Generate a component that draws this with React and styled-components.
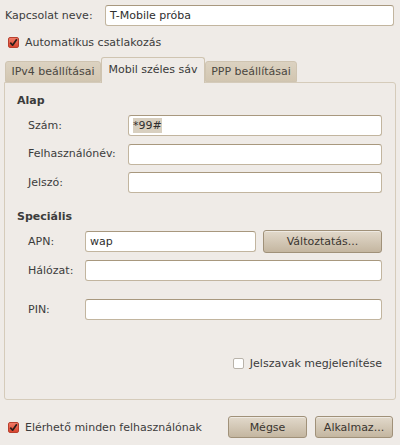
import React from "react";
import styled, { createGlobalStyle } from "styled-components";

const Global = createGlobalStyle`
  html, body { margin: 0; padding: 0; background: #efebe7; }
  body { width: 400px; height: 445px; overflow: hidden; font-family: "DejaVu Sans", sans-serif; font-size: 11px; color: #3c3c3c; }
  * { box-sizing: border-box; }
`;

const Root = styled.div`
  width: 400px;
  height: 445px;
  padding: 5px 7px 0 4px;
  display: flex;
  flex-direction: column;
`;

const NameRow = styled.div`
  display: flex;
  align-items: center;
  height: 21px;
`;

const Label = styled.span`
  width: ${(p) => p.$w || "auto"};
  padding-left: ${(p) => p.$indent || 0}px;
  flex-shrink: 0;
  white-space: nowrap;
  line-height: 14px;
`;

const Input = styled.div`
  height: 21px;
  width: ${(p) => (p.$w ? p.$w + "px" : "auto")};
  flex: ${(p) => (p.$w ? "none" : "1")};
  background: #ffffff;
  border: 1px solid #c2b59f;
  border-top-color: #a8987e;
  border-radius: 3px;
  padding: 0 4px;
  display: flex;
  align-items: center;
  color: #2e2e2e;
  font-size: 11px;
  white-space: nowrap;
`;

const Selected = styled.span`
  background: #d8cfbf;
  line-height: 15px;
`;

const CheckRow = styled.label`
  display: flex;
  align-items: center;
  gap: 6px;
  height: 14px;
  margin-top: ${(p) => p.$mt || 0}px;
  padding-left: ${(p) => p.$pl || 0}px;
  justify-content: ${(p) => (p.$right ? "flex-end" : "flex-start")};
  white-space: nowrap;
`;

const Box = styled.span`
  width: 11px;
  height: 11px;
  flex-shrink: 0;
  border-radius: 2px;
  border: 1px solid ${(p) => (p.$on ? "#b8402e" : "#b9b3aa")};
  background: ${(p) => (p.$on ? "linear-gradient(#f07a66, #d9452f)" : "#ffffff")};
  display: flex;
  align-items: center;
  justify-content: center;
`;

const Check = ({ on }) => (
  <Box $on={on}>
    {on && (
      <svg width="9" height="9" viewBox="0 0 9 9">
        <path d="M1.3 4.6 L3.6 7.2 L7.8 1.2" fill="none" stroke="#2b1d1a" strokeWidth="1.7" strokeLinejoin="round" />
      </svg>
    )}
  </Box>
);

const TabBar = styled.div`
  display: flex;
  align-items: flex-end;
  height: 25px;
  margin-top: 8px;
  padding-left: 1px;
`;

const Tab = styled.div`
  height: ${(p) => (p.$active ? 26 : 21)}px;
  width: ${(p) => p.$w}px;
  margin-bottom: ${(p) => (p.$active ? -1 : 0)}px;
  position: relative;
  z-index: ${(p) => (p.$active ? 2 : 1)};
  border: 1px solid #cfc4b1;
  border-bottom: ${(p) => (p.$active ? "none" : "1px solid #cfc4b1")};
  border-radius: 3px 3px 0 0;
  background: ${(p) => (p.$active ? "#efebe7" : "linear-gradient(#dcd2c1, #d2c6b1)")};
  display: flex;
  align-items: center;
  justify-content: center;
  padding-bottom: ${(p) => (p.$active ? 3 : 0)}px;
  white-space: nowrap;
  color: ${(p) => (p.$active ? "#3a3a3a" : "#4a4640")};
`;

const Panel = styled.div`
  width: 392px;
  height: 318px;
  border: 1px solid #d5cbba;
  border-radius: 0 3px 3px 3px;
  padding: 11px 13px 0 12px;
  display: flex;
  flex-direction: column;
`;

const Heading = styled.div`
  font-weight: bold;
  line-height: 14px;
  height: 14px;
  margin-top: ${(p) => p.$mt || 0}px;
`;

const FormGrid = styled.div`
  display: grid;
  grid-template-columns: ${(p) => p.$cols};
  row-gap: ${(p) => p.$gap}px;
  margin-top: ${(p) => p.$mt}px;
  align-items: center;
`;

const FieldRow = styled.div`
  display: flex;
  align-items: center;
  gap: 7px;
  margin-top: ${(p) => p.$mt || 0}px;
  height: ${(p) => p.$h || 21}px;
`;

const Button = styled.button`
  height: ${(p) => p.$h || 22}px;
  width: ${(p) => p.$w}px;
  font-family: "DejaVu Sans", sans-serif;
  font-size: 11px;
  color: #3a3530;
  border: 1px solid #a09179;
  border-radius: 3px;
  background: linear-gradient(#e2d9cb, #c4b6a0);
  box-shadow: inset 0 1px 0 rgba(255, 255, 255, 0.45);
  padding: 0;
  flex-shrink: 0;
`;

const Footer = styled.div`
  display: flex;
  align-items: center;
  margin-top: 16px;
  height: 22px;
`;

const Spacer = styled.div`
  flex: 1;
`;

const Buttons = styled.div`
  display: flex;
  gap: 8px;
`;

export default function App() {
  return (
    <>
      <Global />
      <Root>
        <NameRow>
          <Label $w="101px" $indent={1}>Kapcsolat neve:</Label>
          <Input $w={289}>T-Mobile próba</Input>
        </NameRow>
        <CheckRow $mt={9} $pl={4}>
          <Check on />
          <span>Automatikus csatlakozás</span>
        </CheckRow>
        <TabBar>
          <Tab $w={96}>IPv4 beállításai</Tab>
          <Tab $w={104} $active>Mobil széles sáv</Tab>
          <Tab $w={92}>PPP beállításai</Tab>
        </TabBar>
        <Panel>
          <Heading>Alap</Heading>
          <FormGrid $cols="100px 254px" $gap={7.5} $mt={7} style={{ paddingLeft: 11 }}>
            <Label>Szám:</Label>
            <Input><Selected>*99#</Selected></Input>
            <Label>Felhasználónév:</Label>
            <Input />
            <Label>Jelszó:</Label>
            <Input />
          </FormGrid>
          <Heading $mt={17}>Speciális</Heading>
          <div style={{ paddingLeft: 11 }}>
            <FieldRow $mt={6} $h={23}>
              <Label $w="50px">APN:</Label>
              <Input $w={171}>wap</Input>
              <Button $w={119} $h={23}>Változtatás...</Button>
            </FieldRow>
            <FieldRow $mt={7}>
              <Label $w="50px">Hálózat:</Label>
              <Input />
            </FieldRow>
            <FieldRow $mt={18}>
              <Label $w="50px">PIN:</Label>
              <Input />
            </FieldRow>
          </div>
          <CheckRow $mt={36} $right>
            <Check />
            <span>Jelszavak megjelenítése</span>
          </CheckRow>
        </Panel>
        <Footer>
          <CheckRow $pl={4}>
            <Check on />
            <span>Elérhető minden felhasználónak</span>
          </CheckRow>
          <Spacer />
          <Buttons>
            <Button $w={79}>Mégse</Button>
            <Button $w={78}>Alkalmaz...</Button>
          </Buttons>
        </Footer>
      </Root>
    </>
  );
}
